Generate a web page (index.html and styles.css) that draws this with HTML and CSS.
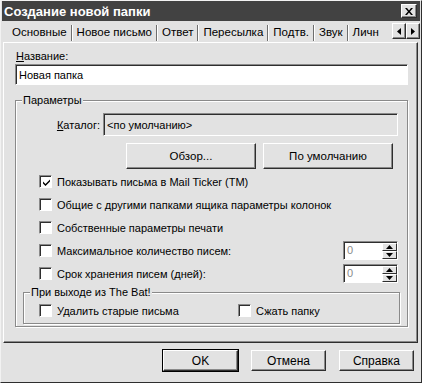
FILE: index.html
```html
<!DOCTYPE html>
<html lang="ru">
<head>
  <meta charset="UTF-8">
  <title>Создание новой папки</title>
  <link rel="stylesheet" href="styles.css">
</head>
<body>
  <div class="window">
    <div class="titlebar">
      <span class="title">Создание новой папки</span>
      <span class="close">
        <svg width="8" height="7" viewBox="0 0 8 7"><path d="M0 0h2l2 2.5L6 0h2L5 3.5 8 7H6L4 4.5 2 7H0l3-3.5z" fill="#000"/></svg>
      </span>
    </div>

    <div class="tabs">
      <div class="tab active">Основные</div>
      <div class="tab">Новое письмо</div>
      <div class="tab">Ответ</div>
      <div class="tab">Пересылка</div>
      <div class="tab">Подтв.</div>
      <div class="tab">Звук</div>
      <div class="tab last">Личн</div>
      <div class="tab-arrows">
        <span class="arrow-btn"><svg width="4" height="7" viewBox="0 0 4 7"><path d="M4 0v7L0 3.5z" fill="#000"/></svg></span>
        <span class="arrow-btn"><svg width="4" height="7" viewBox="0 0 4 7"><path d="M0 0v7l4-3.5z" fill="#000"/></svg></span>
      </div>
    </div>

    <div class="panel">
      <div class="field-label"><u>Н</u>азвание:</div>
      <div class="text-input">Новая папка</div>

      <fieldset class="group params">
        <legend>Параметры</legend>

        <div class="catalog-row">
          <span class="catalog-label"><u>К</u>аталог:</span>
          <div class="catalog-field">&lt;по умолчанию&gt;</div>
        </div>

        <div class="button-row">
          <span class="btn wide">Обзор...</span>
          <span class="btn wide">По умолчанию</span>
        </div>

        <div class="check-row">
          <span class="checkbox checked">
            <svg width="7" height="7" viewBox="0 0 7 7"><path d="M0 2.5l2.5 2.5L7 0.5v2L2.5 7 0 4.5z" fill="#000"/></svg>
          </span>
          <span>Показывать письма в Mail Ticker (TM)</span>
        </div>
        <div class="check-row">
          <span class="checkbox"></span>
          <span>Общие с другими папками ящика параметры колонок</span>
        </div>
        <div class="check-row">
          <span class="checkbox"></span>
          <span>Собственные параметры печати</span>
        </div>
        <div class="check-row">
          <span class="checkbox"></span>
          <span class="grow">Максимальное количество писем:</span>
          <div class="spin">
            <span class="spin-value">0</span>
            <span class="spin-buttons">
              <span class="spin-btn"><svg width="7" height="4" viewBox="0 0 7 4"><path d="M0 4h7L3.5 0z" fill="#000"/></svg></span>
              <span class="spin-btn"><svg width="7" height="4" viewBox="0 0 7 4"><path d="M0 0h7L3.5 4z" fill="#000"/></svg></span>
            </span>
          </div>
        </div>
        <div class="check-row">
          <span class="checkbox"></span>
          <span class="grow">Срок хранения писем (дней):</span>
          <div class="spin">
            <span class="spin-value">0</span>
            <span class="spin-buttons">
              <span class="spin-btn"><svg width="7" height="4" viewBox="0 0 7 4"><path d="M0 4h7L3.5 0z" fill="#000"/></svg></span>
              <span class="spin-btn"><svg width="7" height="4" viewBox="0 0 7 4"><path d="M0 0h7L3.5 4z" fill="#000"/></svg></span>
            </span>
          </div>
        </div>

        <fieldset class="group exit">
          <legend>При выходе из The Bat!</legend>
          <div class="exit-row">
            <div class="check-row half">
              <span class="checkbox"></span>
              <span>Удалить старые письма</span>
            </div>
            <div class="check-row">
              <span class="checkbox"></span>
              <span>Сжать папку</span>
            </div>
          </div>
        </fieldset>
      </fieldset>
    </div>

    <div class="footer">
      <span class="btn default">OK</span>
      <span class="btn">Отмена</span>
      <span class="btn">Справка</span>
    </div>
  </div>
</body>
</html>
```

FILE: styles.css
```css
body {
  margin: 0;
  font-family: "Liberation Sans", Arial, sans-serif;
  font-size: 11px;
  color: #000;
  background: #e2e2e2;
}

.window {
  width: 422px;
  height: 383px;
  box-sizing: border-box;
  background: #e2e2e2;
  border: 1px solid;
  border-color: #f2f2f2 #2e2e2e #2e2e2e #f2f2f2;
  padding: 0 1px 0 1px;
  display: flex;
  flex-direction: column;
}

/* title bar */
.titlebar {
  height: 20px;
  background: #424242;
  color: #fff;
  font-weight: bold;
  font-size: 13px;
  display: flex;
  align-items: center;
  justify-content: space-between;
  padding: 0 3px 0 2px;
}

.close {
  width: 14px;
  height: 12px;
  background: #e2e2e2;
  border: 1px solid;
  border-color: #fff #2e2e2e #2e2e2e #fff;
  box-shadow: inset -1px -1px 0 #8a8a8a;
  display: flex;
  align-items: center;
  justify-content: center;
}

/* tabs */
.tabs {
  height: 21px;
  display: flex;
  align-items: flex-end;
  padding-left: 4px;
  font-size: 11.5px;
}

.tab {
  height: 16px;
  line-height: 14px;
  padding: 0 4px;
  margin-bottom: 1px;
  margin-right: 1px;
  border-right: 1px solid #6e6e6e;
  box-shadow: 1px 0 0 #fff;
  white-space: nowrap;
}

.tab.active {
  padding-left: 6px;
}

.tab.last {
  border-right: none;
  box-shadow: none;
  padding-right: 0;
  flex: 1;
}

.tab-arrows {
  display: flex;
  align-self: flex-start;
  margin-top: 2px;
}

.arrow-btn {
  width: 12px;
  height: 14px;
  background: #e2e2e2;
  border: 1px solid;
  border-color: #fff #2e2e2e #2e2e2e #fff;
  box-shadow: inset -1px -1px 0 #8a8a8a;
  display: flex;
  align-items: center;
  justify-content: center;
}

/* panel */
.panel {
  height: 301px;
  box-sizing: border-box;
  margin: 0 2px 0 1px;
  border: 1px solid;
  border-color: #fff #2e2e2e #2e2e2e #fff;
  box-shadow: inset -1px -1px 0 #8a8a8a;
  padding: 6px 9px 0 11px;
}

.field-label {
  line-height: 14px;
  padding-left: 1px;
  margin-bottom: 1px;
}

.text-input {
  height: 21px;
  box-sizing: border-box;
  background: #fff;
  border: 1px solid;
  border-color: #8a8a8a #fff #fff #8a8a8a;
  box-shadow: inset 1px 1px 0 #2e2e2e;
  padding: 3px 0 0 3px;
  line-height: 14px;
}

/* group boxes */
.group {
  margin: 8px 0 0;
  padding: 0;
  border: 1px solid #8a8a8a;
  box-shadow: inset 1px 1px 0 #fff, 1px 1px 0 #fff;
}

.group legend {
  line-height: 14px;
  padding: 0 1px;
  margin-left: 6px;
  background: #e2e2e2;
}

.params {
  height: 234px;
  box-sizing: border-box;
}

.catalog-row {
  display: flex;
  align-items: center;
  justify-content: flex-end;
  margin-top: 6px;
  padding-right: 9px;
}

.catalog-label {
  margin-right: 3px;
}

.catalog-field {
  width: 295px;
  height: 23px;
  box-sizing: border-box;
  border: 1px solid;
  border-color: #8a8a8a #fff #fff #8a8a8a;
  box-shadow: inset 1px 1px 0 #2e2e2e;
  padding: 4px 0 0 3px;
  line-height: 14px;
}

.button-row {
  display: flex;
  gap: 7px;
  margin-top: 7px;
  padding-left: 110px;
}

.btn {
  width: 75px;
  height: 21px;
  box-sizing: border-box;
  background: #e2e2e2;
  border: 1px solid;
  border-color: #fff #2e2e2e #2e2e2e #fff;
  box-shadow: inset -1px -1px 0 #8a8a8a;
  display: flex;
  align-items: center;
  justify-content: center;
}

.btn.wide {
  width: 130px;
  height: 26px;
  font-size: 11.5px;
}

.btn.default {
  outline: 1px solid #000;
}

.check-row {
  height: 23px;
  display: flex;
  align-items: center;
  padding-left: 23px;
}

.button-row + .check-row {
  margin-top: 1px;
}

.checkbox {
  width: 13px;
  height: 13px;
  box-sizing: border-box;
  background: #fff;
  border: 1px solid;
  border-color: #8a8a8a #fff #fff #8a8a8a;
  box-shadow: inset 1px 1px 0 #2e2e2e;
  margin-right: 5px;
  display: flex;
  align-items: center;
  justify-content: center;
  flex: none;
}

.checkbox svg {
  margin: 1px 0 0 1px;
}

.grow {
  flex: 1;
}

.spin {
  width: 55px;
  height: 19px;
  box-sizing: border-box;
  margin-right: 9px;
  background: #fff;
  border: 1px solid;
  border-color: #8a8a8a #fff #fff #8a8a8a;
  box-shadow: inset 1px 1px 0 #2e2e2e;
  display: flex;
  padding: 1px 0 0 1px;
}

.spin-value {
  flex: 1;
  color: #8a8a8a;
  padding-left: 2px;
  line-height: 15px;
}

.spin-buttons {
  width: 15px;
  display: flex;
  flex-direction: column;
}

.spin-btn {
  flex: 1;
  background: #e2e2e2;
  border: 1px solid;
  border-color: #fff #2e2e2e #2e2e2e #fff;
  display: flex;
  align-items: center;
  justify-content: center;
}

.exit {
  margin: 0 7px;
  height: 39px;
  box-sizing: border-box;
}

.exit .check-row {
  padding-left: 15px;
}

.exit-row {
  display: flex;
}

.check-row.half {
  width: 184px;
}

/* footer */
.footer {
  flex: 1;
  display: flex;
  justify-content: flex-end;
  gap: 13px;
  padding: 7px 6px 0 0;
  font-size: 12px;
}
```
